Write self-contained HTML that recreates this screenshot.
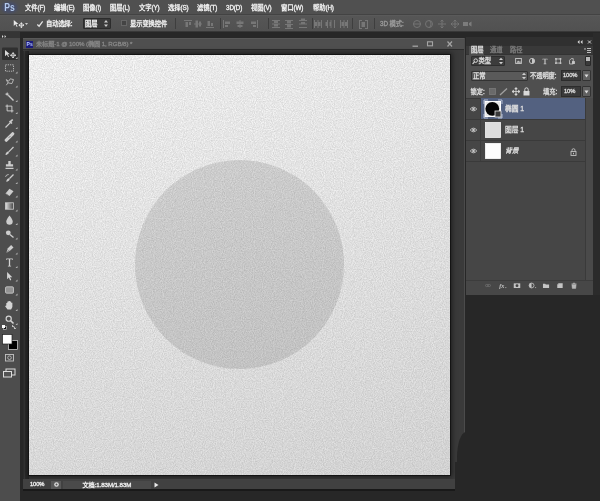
<!DOCTYPE html>
<html lang="zh-CN">
<head>
<meta charset="utf-8">
<title>Photoshop</title>
<style>
*{box-sizing:border-box;margin:0;padding:0}
html,body{width:600px;height:501px;overflow:hidden;background:#272727}
body{position:relative;font-family:"Liberation Sans","Noto Sans CJK SC",sans-serif;font-size:6px;color:#e6e6e6;line-height:1}
.abs{position:absolute}
.t{position:absolute;white-space:nowrap;font-size:6.3px;letter-spacing:-.1px;color:#f2f2f2;-webkit-text-stroke-width:.3px;filter:blur(.3px)}
#menubar{left:0;top:0;width:600px;height:15px;background:#505050;border-bottom:1px solid #434343}
#menubar .t{top:4.5px}
#optbar{left:0;top:15px;width:600px;height:17.3px;background:linear-gradient(#565656,#515151);box-shadow:inset 0 1px 0 #5a5a5a;border-bottom:1px solid #383838}
#optbar .t{top:5.5px}
#toolbar{left:0;top:38px;width:20.3px;height:463px;background:#4d4d4d}
#toolhead{left:0;top:32px;width:20px;height:6px;background:#353535}
#doc{left:23px;top:38px;width:441.5px;height:453px;background:#3a3a3a;border-right:1px solid #4b4b4b;border-bottom:2.5px solid #191919;overflow:hidden}
#doctitle{left:0;top:0;width:441px;height:11.3px;background:#4f4f4f;box-shadow:inset 0 1px 0 #595959}
#docdark{left:0;top:11.3px;width:441px;height:1.2px;background:#2c2c2c}
#canvas{left:6.4px;top:17.4px;width:420.6px;height:419.9px;background:linear-gradient(165deg,#fbfbfb 0%,#dedede 100%);box-shadow:0 0 0 1px #141414,0 0 5px 2px #1c1c1c;overflow:hidden}
#circle{left:105.8px;top:104.8px;width:209px;height:209px;border-radius:50%;background:rgba(0,0,0,.105)}
#status{left:0;top:441px;width:441px;height:9.5px;background:#414141}
#panel .t{color:#dedede}
#panel{left:466px;top:37px;width:126.5px;height:257.5px;background:#4f4f4f;overflow:hidden}
#blob{left:456.5px;top:432px;width:144px;height:69px;background:#272727;border-radius:9px 0 0 0/26px 0 0 0}
#blob2{left:454.5px;top:462px;width:4px;height:39px;background:#272727}
</style>
</head>
<body>
<div id="menubar" class="abs">
  <svg class="abs" style="left:0;top:0" width="20" height="15" viewBox="0 0 20 15"><ellipse cx="9.5" cy="7.5" rx="8" ry="5.5" fill="#3a4c8c" opacity=".45" style="filter:blur(1.5px)"/><text x="4.300" y="11.300" font-family="Liberation Sans, sans-serif" font-size="10.5" font-weight="bold" fill="#b4caee" textLength="10.5" lengthAdjust="spacingAndGlyphs" style="filter:blur(.35px)">Ps</text></svg>
  <span class="t" style="left:25px">文件(F)</span>
  <span class="t" style="left:54px">编辑(E)</span>
  <span class="t" style="left:83px">图像(I)</span>
  <span class="t" style="left:110px">图层(L)</span>
  <span class="t" style="left:139px">文字(Y)</span>
  <span class="t" style="left:168px">选择(S)</span>
  <span class="t" style="left:197px">滤镜(T)</span>
  <span class="t" style="left:226px">3D(D)</span>
  <span class="t" style="left:251px">视图(V)</span>
  <span class="t" style="left:281px">窗口(W)</span>
  <span class="t" style="left:313px">帮助(H)</span>
</div>
<div id="optbar" class="abs">
  <svg class="abs" style="left:8px;top:2px" width="26" height="13" viewBox="0 0 26 13"><g transform="translate(10,6.5) scale(.85)"><path d="M-5,-4 L-5,3 L-3,1 L-1.5,4 L-0.5,3.5 L-2,0.7 L0.5,0.7 Z" fill="#e8e8e8"/><path d="M4,-1 v6 M1,2 h6 M4,-1 l-1,1.2 h2z M4,5 l-1,-1.2 h2z M1,2 l1.2,-1 v2z M7,2 l-1.2,-1 v2z" stroke="#e8e8e8" stroke-width="0.8" fill="#e8e8e8"/></g><path d="M17,6 h3 l-1.5,2z" fill="#ccc"/></svg>
  <svg class="abs" style="left:36px;top:4.5px" width="8" height="8" viewBox="0 0 9 9"><path d="M1.5,5 L3.5,7 L7.5,1.5" fill="none" stroke="#e4e4e4" stroke-width="1.4"/></svg>
  <span class="t" style="left:46px">自动选择:</span>
  <div class="abs" style="left:83px;top:3px;width:28px;height:11px;background:#3a3a3a;border:1px solid #2c2c2c;border-radius:1px"></div>
  <span class="t" style="left:85px">图层</span>
  <svg class="abs" style="left:103px;top:4px" width="6" height="9" viewBox="0 0 6 9"><path d="M1,3.5 L3,1 L5,3.5z M1,5.5 L3,8 L5,5.5z" fill="#ccc"/></svg>
  <div class="abs" style="left:121px;top:5px;width:6px;height:6px;background:#444;border:1px solid #666"></div>
  <span class="t" style="left:130px">显示变换控件</span>
  <span class="t" style="left:380px;color:#9c9c9c">3D 模式:</span>
  <svg class="abs" style="left:170px;top:1px" width="310" height="15" viewBox="0 0 310 15">
    <g stroke="#3e3e3e" stroke-width="1"><path d="M5.5,2 v11 M50.5,2 v11 M98.5,2 v11 M142.5,2 v11 M182.5,2 v11 M204.5,2 v11"/></g>
    <g fill="#777" stroke="none">
      <path d="M14,4 h8 v1 h-8z M15.5,6 h2.5 v5 h-2.5z M19,6 h2 v3 h-2z"/>
      <path d="M24,7.5 h8 v1 h-8z M25.5,4.5 h2.5 v7 h-2.5z M29,5.5 h2 v5 h-2z"/>
      <path d="M36,11 h8 v1 h-8z M37.5,5 h2.5 v5 h-2.5z M41,7 h2 v3 h-2z"/>
      <path d="M53,4 h1 v8 h-1z M55,5.5 h5 v2.5 h-5z M55,9 h3 v2 h-3z"/>
      <path d="M69.5,4 h1 v8 h-1z M66.5,5.5 h7 v2.5 h-7z M67.5,9 h5 v2 h-5z"/>
      <path d="M87,4 h1 v8 h-1z M81,5.5 h5 v2.5 h-5z M83,9 h3 v2 h-3z"/>
      <path d="M102,4 h8 v1 h-8z M102,7.5 h8 v1 h-8z M102,11 h8 v1 h-8z M104,5 h4 v2 h-4z M104,8.5 h4 v2 h-4z"/>
      <path d="M115,4 h8 v1 h-8z M115,8 h8 v1 h-8z M115,12 h8 v1 h-8z M117,5 h4 v2.5 h-4z M117,9 h4 v2.5 h-4z"/>
      <path d="M129,4 h8 v1 h-8z M129,7.5 h8 v1 h-8z M129,11 h8 v1 h-8z M131,2.5 h4 v1.5 h-4z M131,6 h4 v1.5 h-4z"/>
      <path d="M144,4 h1 v8 h-1z M147.5,4 h1 v8 h-1z M151,4 h1 v8 h-1z M145,6 h2 v4 h-2z M148.5,6 h2 v4 h-2z"/>
      <path d="M157,4 h1 v8 h-1z M160.5,4 h1 v8 h-1z M164,4 h1 v8 h-1z M155.5,6 h2 v4 h-2z M159.5,6 h2 v4 h-2z"/>
      <path d="M170,4 h1 v8 h-1z M173.5,4 h1 v8 h-1z M177,4 h1 v8 h-1z M171.5,6 h2 v4 h-2z M175,6 h2 v4 h-2z"/>
      <path d="M189,4 h3 v1 h-2 v7 h2 v1 h-3z M198,4 h-3 v1 h2 v7 h-2 v1 h3z M191.5,6 h3.5 v5 h-3.5z"/>
    </g>
    <g fill="none" stroke="#747474" stroke-width="1">
      <circle cx="247" cy="8" r="3.5"/><path d="M243,8 h8"/>
      <circle cx="259" cy="8" r="3.5"/><path d="M259,4.5 a2,3.5 0 0 1 0,7"/>
      <path d="M272,4 v8 M268,8 h8 M270.5,5.5 l1.5,-1.5 l1.5,1.5 M270.5,10.5 l1.5,1.5 l1.5,-1.5"/>
      <path d="M285,4 v8 M281,8 h8 M283.5,5.5 l1.5,-1.5 l1.5,1.5 M283.5,10.5 l1.5,1.5 l1.5,-1.5 M282.5,6.5 l-1.5,1.5 l1.5,1.5 M287.5,6.5 l1.5,1.5 l-1.5,1.5"/>
    </g>
    <path d="M293,6 h5 v4 h-5z M299,7 l2.5,-1.5 v5 l-2.5,-1.5z" fill="#7c7c7c"/>
  </svg>
</div>
<div id="toolhead" class="abs"><svg class="abs" style="left:2px;top:2.5px" width="6" height="3" viewBox="0 0 8 4"><path d="M0,0 L2,2 L0,4z M3.5,0 L5.5,2 L3.5,4z" fill="#ddd"/></svg></div>
<div id="toolbar" class="abs"><svg class="abs" style="left:0;top:0" width="20" height="463" viewBox="0 0 20 463"><defs><linearGradient id="gr"><stop offset="0" stop-color="#eee"/><stop offset="1" stop-color="#444"/></linearGradient></defs><rect x="2" y="9.5" width="16" height="12.5" rx="1" fill="#303030"/><g transform="translate(9.5,15.5)"><g transform="scale(0.9)" opacity=".92"><path d="M-5,-4 L-5,3 L-3,1 L-1.5,4 L-0.5,3.5 L-2,0.7 L0.5,0.7 Z" fill="#e8e8e8"/><path d="M4,-1 v6 M1,2 h6 M4,-1 l-1,1.2 h2z M4,5 l-1,-1.2 h2z M1,2 l1.2,-1 v2z M7,2 l-1.2,-1 v2z" stroke="#e8e8e8" stroke-width="0.8" fill="#e8e8e8"/></g><path d="M6,5.5 h2 v-2z" fill="#b8b8b8"/></g><g transform="translate(9.5,30)"><g transform="scale(0.8)" opacity=".92"><rect x="-5" y="-4" width="10" height="8" fill="none" stroke="#d8d8d8" stroke-width="1" stroke-dasharray="1.6 1.2"/></g><path d="M6,5.5 h2 v-2z" fill="#b8b8b8"/></g><g transform="translate(9.5,44)"><g transform="scale(0.8)" opacity=".92"><path d="M-4,-3 L-1,-1 L1,-4 L5,-3 L3,2 L-2,1 Z M-2,1 L-4,4" fill="none" stroke="#d8d8d8" stroke-width="1"/></g><path d="M6,5.5 h2 v-2z" fill="#b8b8b8"/></g><g transform="translate(9.5,58.5)"><g transform="scale(0.8)" opacity=".92"><path d="M5,5 L-1.5,-1.5" stroke="#d8d8d8" stroke-width="1.700"/><path d="M-3,-6 L-2.300,-3.800 L0,-3 L-2.300,-2.200 L-3,0 L-3.700,-2.200 L-6,-3 L-3.700,-3.800Z" fill="#e4e4e4"/></g><path d="M6,5.5 h2 v-2z" fill="#b8b8b8"/></g><g transform="translate(9.5,70.5)"><g transform="scale(0.8)" opacity=".92"><path d="M-3,-5 V3 H5 M-5,-3 H3 V5" fill="none" stroke="#d8d8d8" stroke-width="1.2"/></g><path d="M6,5.5 h2 v-2z" fill="#b8b8b8"/></g><g transform="translate(9.5,85.5)"><g transform="scale(0.8)" opacity=".92"><path d="M-5,5 L1,-1" stroke="#d8d8d8" stroke-width="1.5"/><path d="M0,-3 L3,0 M1,-2 L4,-5" stroke="#d8d8d8" stroke-width="2.2"/></g><path d="M6,5.5 h2 v-2z" fill="#b8b8b8"/></g><g transform="translate(9.5,99)"><g transform="scale(0.8)" opacity=".92"><path d="M-4,4 L4,-4" stroke="#d8d8d8" stroke-width="4" stroke-linecap="round"/><path d="M-1,1 L1,-1" stroke="#666" stroke-width="1"/></g><path d="M6,5.5 h2 v-2z" fill="#b8b8b8"/></g><g transform="translate(9.5,113)"><g transform="scale(0.8)" opacity=".92"><path d="M5,-5 L-1,1" stroke="#d8d8d8" stroke-width="1.5"/><path d="M-1,1 C-2,0 -5,2 -5,5 C-3,5 0,3 -1,1Z" fill="#d8d8d8"/></g><path d="M6,5.5 h2 v-2z" fill="#b8b8b8"/></g><g transform="translate(9.5,127)"><g transform="scale(0.8)" opacity=".92"><path d="M-1.5,-5 h3 v4 h3 v3 h-9 v-3 h3z M-5,3.5 h10 v1.5 h-10z" fill="#d8d8d8"/></g><path d="M6,5.5 h2 v-2z" fill="#b8b8b8"/></g><g transform="translate(9.5,140.5)"><g transform="scale(0.8)" opacity=".92"><path d="M5,-5 L0,0" stroke="#d8d8d8" stroke-width="1.5"/><path d="M0,0 C-1,-1 -4,1 -4,4 C-2,4 1,2 0,0Z" fill="#d8d8d8"/><path d="M-5,-2 A4,4 0 0 1 -1,-5" fill="none" stroke="#d8d8d8" stroke-width="1"/></g><path d="M6,5.5 h2 v-2z" fill="#b8b8b8"/></g><g transform="translate(9.5,154)"><g transform="scale(0.8)" opacity=".92"><path d="M-5,2 L0,-4 L5,-1 L0,5 Z" fill="#d8d8d8"/><path d="M-5,2 L-1,4.5" stroke="#777" stroke-width="1"/></g><path d="M6,5.5 h2 v-2z" fill="#b8b8b8"/></g><g transform="translate(9.5,168)"><g transform="scale(0.8)" opacity=".92"><rect x="-5" y="-4" width="10" height="8" fill="url(#gr)" stroke="#d8d8d8" stroke-width="1"/></g><path d="M6,5.5 h2 v-2z" fill="#b8b8b8"/></g><g transform="translate(9.5,181.5)"><g transform="scale(0.8)" opacity=".92"><path d="M0,-5 C3,-1 4,1 4,2.5 A4,4 0 0 1 -4,2.5 C-4,1 -3,-1 0,-5Z" fill="#d8d8d8"/></g><path d="M6,5.5 h2 v-2z" fill="#b8b8b8"/></g><g transform="translate(9.5,196)"><g transform="scale(0.8)" opacity=".92"><circle cx="-1.5" cy="-1.5" r="3" fill="#d8d8d8"/><path d="M0.5,0.5 L5,4.5" stroke="#d8d8d8" stroke-width="1.700"/></g><path d="M6,5.5 h2 v-2z" fill="#b8b8b8"/></g><g transform="translate(9.5,211)"><g transform="scale(0.8)" opacity=".92"><path d="M-4,5 L-2,-1 L2,-5 L5,-2 L1,2 Z" fill="#d8d8d8"/><path d="M-4,5 L0,1" stroke="#555" stroke-width=".8"/></g><path d="M6,5.5 h2 v-2z" fill="#b8b8b8"/></g><g transform="translate(9.5,224.5)"><g transform="scale(0.8)" opacity=".92"><path d="M-4,-5 H4 V-3 H3.2 V-4 H0.8 V4 H2 V5 H-2 V4 H-0.8 V-4 H-3.2 V-3 H-4Z" fill="#e0e0e0"/></g><path d="M6,5.5 h2 v-2z" fill="#b8b8b8"/></g><g transform="translate(9.5,238)"><g transform="scale(0.8)" opacity=".92"><path d="M-3,-5 L-3,4 L-0.8,2 L0.8,5.5 L2.2,4.8 L0.6,1.5 L3.5,1.5 Z" fill="#e0e0e0"/></g><path d="M6,5.5 h2 v-2z" fill="#b8b8b8"/></g><g transform="translate(9.5,252)"><g transform="scale(0.8)" opacity=".92"><rect x="-5" y="-4" width="10" height="8" rx="1.5" fill="#9a9a9a" stroke="#d8d8d8" stroke-width="1"/></g><path d="M6,5.5 h2 v-2z" fill="#b8b8b8"/></g><g transform="translate(9.5,267.5)"><g transform="scale(0.8)" opacity=".92"><path d="M-4,0 L-4,-3 L-2.8,-3 L-2.5,-5 L-1.2,-5 L-1,-5.6 L0.4,-5.6 L0.6,-5 L2,-5 L2.2,-3.5 L3.6,-3.5 L3.6,2 L2,5 H-2.5 L-5.5,1 L-4.8,0.2Z" fill="#e0e0e0"/></g><path d="M6,5.5 h2 v-2z" fill="#b8b8b8"/></g><g transform="translate(9.5,281.5)"><g transform="scale(0.8)" opacity=".92"><circle cx="-1" cy="-1" r="3.2" fill="none" stroke="#e0e0e0" stroke-width="1.5"/><path d="M1.5,1.5 L5,5" stroke="#e0e0e0" stroke-width="2"/></g><path d="M6,5.5 h2 v-2z" fill="#b8b8b8"/></g><g transform="translate(0,-38)"><rect x="3.5" y="326.5" width="3" height="3" fill="#111" stroke="#ddd" stroke-width=".6"/><rect x="2" y="325" width="3" height="3" fill="#fff"/><path d="M12,326 q3,0 3,3 M12,326 l1.2,-1 M12,326 l1.2,1 M15,329 l-1,-1.2 M15,329 l1,-1.2" stroke="#ddd" stroke-width=".7" fill="none"/><rect x="8.5" y="340.5" width="9" height="9" fill="#000" stroke="#ddd" stroke-width=".7"/><rect x="2.5" y="334.5" width="9.5" height="9.5" fill="#fff" stroke="#222" stroke-width=".7"/><rect x="5.5" y="354.5" width="8" height="6.5" fill="none" stroke="#c4c4c4" stroke-width=".9"/><circle cx="9.5" cy="357.700" r="1.800" fill="none" stroke="#c4c4c4" stroke-width=".8"/><rect x="6" y="369" width="9" height="6" fill="none" stroke="#ddd" stroke-width="1"/><rect x="3.5" y="371.5" width="8" height="5.5" fill="#535353" stroke="#ddd" stroke-width="1"/></g></svg></div>
<div id="doc" class="abs">
  <div id="doctitle" class="abs">
    <svg class="abs" style="left:2.5px;top:2.5px" width="7" height="7" viewBox="0 0 7 7"><rect width="7" height="7" fill="#1c1c7c"/><text x=".6" y="5.400" font-family="Liberation Sans, sans-serif" font-size="5" font-weight="bold" fill="#b8c8ff">Ps</text></svg>
    <span class="t" style="left:13px;top:2.5px;color:#868686;font-size:6.200px">未标题-1 @ 100% (椭圆 1, RGB/8) *</span>
    <svg class="abs" style="left:385px;top:1px" width="50" height="10" viewBox="0 0 50 10"><path d="M4.5,7.200 h5.5" stroke="#a4a4a4" stroke-width="1.300"/><rect x="19.5" y="2.800" width="5" height="4" fill="none" stroke="#a4a4a4" stroke-width="1.100"/><path d="M39.5,2.5 L44,7.5 M44,2.5 L39.5,7.5" stroke="#a4a4a4" stroke-width="1.200"/></svg>
  </div>
  <div id="docdark" class="abs"></div>
  <div class="abs" style="left:0;top:13px;width:6px;height:440px;background:linear-gradient(90deg,#2d2d2d 0,#2d2d2d 12%,#3a3a3a 14%,#3a3a3a 24%,#2b2b2b 28%,#242424 100%)"></div>
  <div id="canvas" class="abs">
    <svg class="abs" style="left:0;top:0;mix-blend-mode:multiply" width="421" height="420"><filter id="nz" color-interpolation-filters="sRGB" x="0" y="0" width="100%" height="100%"><feTurbulence type="fractalNoise" baseFrequency="0.9" numOctaves="2" seed="3" result="n"/><feGaussianBlur stdDeviation="0.25"/><feColorMatrix type="matrix" values="-0.21 0 0 0 1.05  -0.21 0 0 0 1.05  -0.21 0 0 0 1.05  0 0 0 0 1"/></filter><rect width="421" height="420" filter="url(#nz)"/></svg>
    <div id="circle" class="abs"></div>
  </div>
  <div id="status" class="abs">
    <span class="t" style="left:7px;top:2.800px;font-size:5.800px">100%</span>
    <div class="abs" style="left:28px;top:1.5px;width:10px;height:8px;background:#585858"></div>
    <svg class="abs" style="left:29.5px;top:2px" width="7" height="7" viewBox="0 0 7 7"><circle cx="3.5" cy="3.5" r="2.300" fill="#ddd"/><circle cx="3.5" cy="3.5" r="1" fill="#555"/></svg>
    <div class="abs" style="left:40px;top:1.5px;width:88px;height:8px;background:#4a4a4a"></div>
    <span class="t" style="left:59.5px;top:2.600px;font-size:6.200px">文档:1.83M/1.83M</span>
    <svg class="abs" style="left:131px;top:2.700px" width="5" height="6" viewBox="0 0 5 6"><path d="M.5,.5 L4.5,3 L.5,5.5z" fill="#e8e8e8"/></svg>
  </div>
</div>
<div id="blob" class="abs"></div><div id="blob2" class="abs"></div>
<div id="panel" class="abs">
  <div class="abs" style="left:0;top:0;width:126.500px;height:8.500px;background:#303030"></div>
  <svg class="abs" style="left:111px;top:3px" width="16" height="5" viewBox="0 0 16 5"><path d="M2.500,0 L0.500,2 L2.500,4z M5.500,0 L3.500,2 L5.500,4z" fill="#ddd"/><path d="M11,0.500 L14,3.500 M14,0.500 L11,3.500" stroke="#ddd" stroke-width=".9"/></svg>
  <div class="abs" style="left:0;top:8.500px;width:126.500px;height:9px;background:#393939;border-bottom:1px solid #333"></div>
  <div class="abs" style="left:3px;top:8.500px;width:15px;height:9px;background:#4e4e4e"></div>
  <span class="t" style="left:5px;top:10px">图层</span>
  <span class="t" style="left:24px;top:10px;color:#7c7c7c">通道</span>
  <span class="t" style="left:44px;top:10px;color:#7c7c7c">路径</span>
  <svg class="abs" style="left:117.500px;top:11px" width="7" height="5" viewBox="0 0 7 5"><path d="M0,.5 h2 l-1,1.500z" fill="#ddd"/><path d="M3,.5 h4 M3,2.500 h4 M3,4.500 h4" stroke="#ddd" stroke-width=".8"/></svg>

  <!-- filter row -->
  <div class="abs" style="left:4.500px;top:19px;width:34.500px;height:9.500px;background:#3c3c3c;border:1px solid #2e2e2e;border-radius:1px"></div>
  <svg class="abs" style="left:6px;top:20.500px" width="6.500" height="6.500" viewBox="0 0 7 7"><circle cx="4" cy="2.800" r="1.900" fill="none" stroke="#e0e0e0" stroke-width="1"/><path d="M2.600,4.200 L.6,6.500" stroke="#e0e0e0" stroke-width="1.100"/></svg>
  <span class="t" style="left:12.500px;top:21px">类型</span>
  <svg class="abs" style="left:31.500px;top:20px" width="6" height="8" viewBox="0 0 6 8"><path d="M1,3 L3,.8 L5,3z M1,5 L3,7.200 L5,5z" fill="#d0d0d0"/></svg>
  <svg class="abs" style="left:46px;top:19px;opacity:.88" width="70" height="10" viewBox="0 0 70 10">
    <g transform="translate(6.500,5) scale(.82) translate(-6.500,-5)"><rect x="3" y="2" width="7" height="6" fill="none" stroke="#d8d8d8" stroke-width="1.100"/><path d="M4,7 L6,4.500 L7.500,6 L8.500,5 L9.500,7z" fill="#d8d8d8"/></g>
    <g transform="translate(20,5) scale(.82) translate(-20,-5)"><circle cx="20" cy="5" r="3.200" fill="none" stroke="#d8d8d8" stroke-width="1.100"/><path d="M20,1.800 A3.200,3.200 0 0 1 20,8.200z" fill="#d8d8d8"/></g>
    <g transform="translate(33,5.500) scale(.82) translate(-33,-5.500)"><path d="M30,2 h6 v1.500 h-.8 v-.6 h-1.500 v5 h.9 v.9 h-3.200 v-.9 h.9 v-5 h-1.500 v.6 h-.8z" fill="#d8d8d8"/></g>
    <g transform="translate(46.200,5) scale(.82) translate(-46.200,-5)"><rect x="43.500" y="2.500" width="5.500" height="5" fill="none" stroke="#d8d8d8" stroke-width="1"/><rect x="42.400" y="1.400" width="2" height="2" fill="#d8d8d8"/><rect x="48" y="1.400" width="2" height="2" fill="#d8d8d8"/><rect x="42.400" y="6.600" width="2" height="2" fill="#d8d8d8"/><rect x="48" y="6.600" width="2" height="2" fill="#d8d8d8"/></g>
    <g transform="translate(60,5.500) scale(.82) translate(-60,-5.500)"><path d="M57,8.500 v-4.500 l2,-2 h2.500 v6.500z" fill="none" stroke="#d8d8d8" stroke-width="1"/><rect x="60" y="5" width="3.500" height="3.500" fill="#d8d8d8"/></g>
  </svg>
  <div class="abs" style="left:119px;top:19px;width:6px;height:10px;background:#3a3a3a;border:1px solid #2a2a2a;border-radius:1px"></div>
  <div class="abs" style="left:120px;top:20px;width:4px;height:4px;background:#b8b8b8"></div>

  <!-- blend row -->
  <div class="abs" style="left:4.500px;top:33.500px;width:57.500px;height:10px;background:#5a5a5a;border:1px solid #333;border-radius:1px"></div>
  <span class="t" style="left:7px;top:35.500px">正常</span>
  <svg class="abs" style="left:55px;top:34.500px" width="6" height="8" viewBox="0 0 6 8"><path d="M1,3 L3,.8 L5,3z M1,5 L3,7.200 L5,5z" fill="#d0d0d0"/></svg>
  <span class="t" style="left:64px;top:35.500px">不透明度:</span>
  <div class="abs" style="left:95px;top:33px;width:20px;height:11px;background:#3a3a3a;border:1px solid #2c2c2c"></div>
  <span class="t" style="left:97px;top:35.500px;font-size:5.800px">100%</span>
  <div class="abs" style="left:116px;top:33px;width:9px;height:11px;background:#606060;border:1px solid #333;border-radius:1px"></div>
  <svg class="abs" style="left:118px;top:36.500px" width="5" height="4" viewBox="0 0 5 4"><path d="M.5,.5 h4 l-2,3z" fill="#ddd"/></svg>

  <!-- lock row -->
  <span class="t" style="left:4.500px;top:51.500px;font-size:6.300px">锁定:</span>
  <svg class="abs" style="left:21px;top:49px" width="50" height="11" viewBox="0 0 50 11">
    <rect x="2.500" y="2.500" width="6" height="6" fill="#6a6a6a" stroke="#7a7a7a" stroke-width=".8"/>
    <path d="M13,9 L20,2.500" stroke="#a0a0a0" stroke-width="1.300"/>
    <path d="M29,2 v7 M25.500,5.500 h7 M29,1.500 l-1.200,1.500 h2.400z M29,9.500 l-1.200,-1.500 h2.400z M25,5.500 l1.500,-1.200 v2.400z M33,5.500 l-1.500,-1.200 v2.400z" stroke="#d8d8d8" stroke-width=".8" fill="#d8d8d8"/>
    <rect x="36.500" y="5" width="6" height="4.500" fill="#d8d8d8"/><path d="M37.800,5 v-1.500 a1.700,1.700 0 0 1 3.400,0 v1.500" fill="none" stroke="#d8d8d8" stroke-width="1"/>
  </svg>
  <span class="t" style="left:77px;top:51.500px">填充:</span>
  <div class="abs" style="left:95px;top:49px;width:20px;height:11px;background:#3a3a3a;border:1px solid #2c2c2c"></div>
  <span class="t" style="left:98px;top:51.500px;font-size:5.800px">10%</span>
  <div class="abs" style="left:116px;top:49px;width:9px;height:11px;background:#606060;border:1px solid #333;border-radius:1px"></div>
  <svg class="abs" style="left:118px;top:52.500px" width="5" height="4" viewBox="0 0 5 4"><path d="M.5,.5 h4 l-2,3z" fill="#ddd"/></svg>

  <!-- layers list -->
  <div class="abs" style="left:0;top:61px;width:126.500px;height:182px;background:#464646;border-top:1px solid #383838"></div>
  <div class="abs" style="left:119px;top:61px;width:9px;height:182px;background:#4a4a4a;border-left:1px solid #3a3a3a"></div>
  <div class="abs" style="left:14px;top:61px;width:105px;height:21px;background:#536180"></div>
  <div class="abs" style="left:0;top:82px;width:119px;height:1px;background:#3a3a3a"></div>
  <div class="abs" style="left:0;top:103px;width:119px;height:1px;background:#3a3a3a"></div>
  <div class="abs" style="left:0;top:124px;width:119px;height:1px;background:#3a3a3a"></div>
  <div class="abs" style="left:14px;top:61px;width:1px;height:63px;background:#3c3c3c"></div>
  <svg class="abs" style="left:0;top:61px" width="119" height="64" viewBox="0 0 119 64">
    <g id="eye"><path d="M4.200,11 Q7.500,7.300 10.800,11 Q7.500,14.700 4.200,11z" fill="none" stroke="#c4c4c4" stroke-width=".9"/><circle cx="7.500" cy="11" r="1.300" fill="#c8c8c8"/></g>
    <use href="#eye" y="21"/><use href="#eye" y="42"/>
    <!-- thumb 1 -->
    <rect x="19" y="3.500" width="15.500" height="15" fill="#e8e8e8" stroke="#fff" stroke-width="1"/>
    <circle cx="26.300" cy="10.800" r="6.900" fill="#050505"/>
    <rect x="29" y="13" width="6" height="6" fill="#3a3a3a" stroke="#e8e8e8" stroke-width=".8"/>
    <path d="M18,6 v-4 h4 M32,2 h4 v4 M18,16 v4 h4 M36,16 v4 h-4" fill="none" stroke="#cfd6e6" stroke-width=".8"/>
    <!-- thumb 2 -->
    <rect x="19.500" y="24.500" width="15" height="15" fill="#dedede" stroke="#f4f4f4" stroke-width=".8"/>
    <!-- thumb 3 -->
    <rect x="19.500" y="45.500" width="15" height="15" fill="#fdfdfd" stroke="#fff" stroke-width=".8"/>
    <!-- lock -->
    <rect x="105" y="53.500" width="5" height="4" fill="none" stroke="#c0c0c0" stroke-width=".9"/><path d="M106,53.500 v-1.300 a1.500,1.500 0 0 1 3,0 v1.300" fill="none" stroke="#c0c0c0" stroke-width=".9"/><rect x="107" y="54.800" width="1" height="1.500" fill="#c0c0c0"/>
  </svg>
  <span class="t" style="left:39px;top:68.7px;font-size:6.800px">椭圆 1</span>
  <span class="t" style="left:39px;top:89.7px;font-size:6.800px">图层 1</span>
  <span class="t" style="left:39px;top:110.700px;font-size:6.800px;font-style:italic">背景</span>

  <!-- bottom bar -->
  <div class="abs" style="left:0;top:243px;width:126.500px;height:14.500px;background:#474747;border-top:1px solid #3c3c3c"></div>
  <svg class="abs" style="left:14px;top:243.300px;opacity:.82" width="104" height="11" viewBox="0 0 104 11">
    <g transform="translate(8,5.500) scale(0.72) translate(-7.5,-5.500)"><g fill="none" stroke="#7e7e7e" stroke-width="1"><rect x="4" y="4" width="4" height="3" rx="1.500"/><rect x="7" y="4" width="4" height="3" rx="1.500"/></g></g>
    <g transform="translate(22.5,5.500) scale(0.72) translate(-23.5,-5.500)"><text x="19" y="8.500" font-family="Liberation Serif, serif" font-style="italic" font-weight="bold" font-size="8.500" fill="#e0e0e0">fx</text><path d="M27,8 h2.200 l-1.100,1.400z" fill="#ddd"/></g>
    <g transform="translate(37,5.500) scale(0.72) translate(-38.5,-5.500)"><rect x="34" y="2.500" width="9" height="6.500" fill="#e0e0e0"/><circle cx="38.500" cy="5.700" r="2" fill="#444"/></g>
    <g transform="translate(53,5.500) scale(0.72) translate(-54.5,-5.500)"><circle cx="52.500" cy="5.500" r="3.400" fill="none" stroke="#e0e0e0" stroke-width="1.100"/><path d="M52.500,2.100 A3.400,3.400 0 0 0 52.500,8.900z" fill="#e0e0e0"/><path d="M57,8 h2.200 l-1.100,1.400z" fill="#ddd"/></g>
    <g transform="translate(66,5.500) scale(0.72) translate(-67.2,-5.500)"><path d="M63,3 h3 l1,1 h4.500 v5 h-8.500z" fill="#e0e0e0"/></g>
    <g transform="translate(80,5.500) scale(0.72) translate(-79.8,-5.500)"><path d="M77.500,2.500 h6 v6.500 h-7.500 v-5z" fill="#e0e0e0"/><path d="M76,4 h1.500 v-1.500z" fill="#777"/></g>
    <g transform="translate(94,5.500) scale(0.72) translate(-94.5,-5.500)"><path d="M91.500,4 h6 l-.6,5.500 h-4.800z M91,3 h7 M93.500,3 v-1 h2 v1" fill="#d0d0d0" stroke="#d0d0d0" stroke-width=".7"/></g>
  </svg>
</div>
<div class="abs" style="left:592.500px;top:33px;width:7.500px;height:262px;background:#2b2b2b"></div>

</body>
</html>
